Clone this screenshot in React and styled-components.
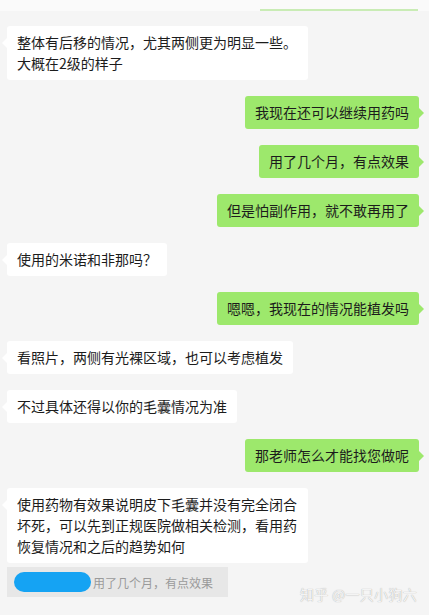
import React from 'react'
import styled, { createGlobalStyle } from 'styled-components'

const Global = createGlobalStyle`
  html, body {
    margin: 0;
    padding: 0;
    background: #f5f5f5;
  }
  body {
    font-family: "Noto Sans CJK SC", "Noto Sans", sans-serif;
  }
`

const Screen = styled.div`
  position: relative;
  width: 429px;
  height: 615px;
  overflow: hidden;
  background: #f5f5f5;
  display: flex;
  flex-direction: column;
`

const TopStrip = styled.div`
  height: 11px;
  background: #fafafa;
  display: flex;
  justify-content: flex-end;
  align-items: flex-end;
  padding-right: 11px;
`

const CutBubble = styled.div`
  width: 158px;
  height: 2px;
  background: #c9ecb5;
`

const Thread = styled.div`
  display: flex;
  flex-direction: column;
  gap: 16px;
  padding: 15px 10px 0 7px;
`

const Row = styled.div`
  display: flex;
  justify-content: ${p => (p.$mine ? 'flex-end' : 'flex-start')};
`

const Bubble = styled.div`
  position: relative;
  max-width: 281px;
  padding: 6px 10px;
  border-radius: 3px;
  font-size: 14px;
  line-height: 21px;
  color: #1c1c1c;
  background: ${p => (p.$mine ? '#9de86c' : '#ffffff')};

  &::before {
    content: '';
    position: absolute;
    top: 12px;
    ${p => (p.$mine ? 'right: -5px;' : 'left: -5px;')}
    border-top: 5px solid transparent;
    border-bottom: 5px solid transparent;
    ${p => (p.$mine ? 'border-left: 5px solid #9de86c;' : 'border-right: 5px solid #ffffff;')}
  }
`

const Quote = styled.div`
  margin: 4px 0 0 7px;
  width: 221px;
  height: 30px;
  box-sizing: border-box;
  background: #e7e7e7;
  display: flex;
  align-items: center;
  padding-left: 7px;
  gap: 2px;
`

const NamePill = styled.span`
  width: 77px;
  height: 20px;
  border-radius: 10px;
  background: #15a3f3;
`

const QuoteText = styled.span`
  font-size: 12px;
  color: #9a9a9a;
`

const Watermark = styled.div`
  position: absolute;
  right: 12px;
  bottom: 11px;
  font-size: 14px;
  color: #f4f4f4;
  text-shadow: 0 0 1px #9c9c9c;
  letter-spacing: 0.3px;
`

const messages = [
  { mine: false, text: '整体有后移的情况，尤其两侧更为明显一些。大概在2级的样子' },
  { mine: true, text: '我现在还可以继续用药吗' },
  { mine: true, text: '用了几个月，有点效果' },
  { mine: true, text: '但是怕副作用，就不敢再用了' },
  { mine: false, text: '使用的米诺和非那吗？' },
  { mine: true, text: '嗯嗯，我现在的情况能植发吗' },
  { mine: false, text: '看照片，两侧有光裸区域，也可以考虑植发' },
  { mine: false, text: '不过具体还得以你的毛囊情况为准' },
  { mine: true, text: '那老师怎么才能找您做呢' },
  { mine: false, text: '使用药物有效果说明皮下毛囊并没有完全闭合坏死，可以先到正规医院做相关检测，看用药恢复情况和之后的趋势如何' },
]

const App = () => {
  return (
    <>
      <Global />
      <Screen>
        <TopStrip>
          <CutBubble />
        </TopStrip>
        <Thread>
          {messages.map((m, i) => (
            <Row key={i} $mine={m.mine}>
              <Bubble $mine={m.mine}>{m.text}</Bubble>
            </Row>
          ))}
        </Thread>
        <Quote>
          <NamePill />
          <QuoteText>用了几个月，有点效果</QuoteText>
        </Quote>
        <Watermark>知乎 @一只小狗六</Watermark>
      </Screen>
    </>
  )
}

export default App
